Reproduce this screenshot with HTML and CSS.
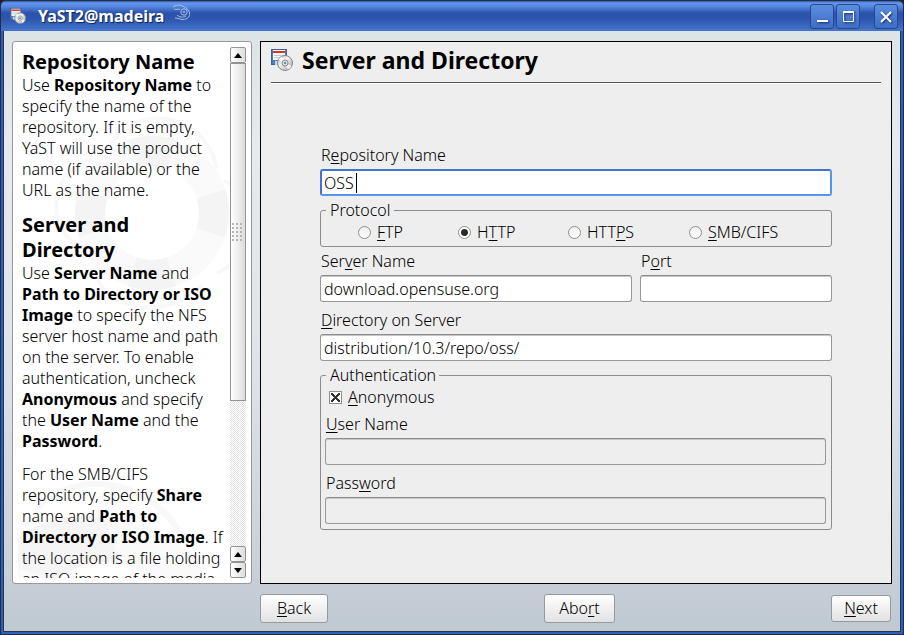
FILE: index.html
```
<!DOCTYPE html>
<html lang="en">
<head>
  <meta charset="UTF-8">
  <title>YaST2@madeira</title>
  <link rel="stylesheet" href="styles.css">
</head>
<body>

<!-- shared drawings -->
<svg class="defs" aria-hidden="true">
  <defs>
    <linearGradient id="disc" x1="0" y1="0" x2="1" y2="1">
      <stop offset="0" stop-color="#bdbdbd"/>
      <stop offset=".4" stop-color="#f1f1f1"/>
      <stop offset="1" stop-color="#a4a4a4"/>
    </linearGradient>
    <symbol id="source" viewBox="0 0 22 22">
      <rect x=".5" y=".5" width="15" height="15" fill="#4a7dc0" stroke="#3d6199"/>
      <rect x="2" y="1" width="12" height="10" fill="#f6f6f6"/>
      <rect x="2" y="2" width="12" height="2" fill="#e0321c"/>
      <path d="M3 6.500H13M3 8.500H10" stroke="#c5cbd6"/>
      <rect x="4" y="12" width="6" height="4" fill="#cfd6e2"/>
      <circle cx="14" cy="14" r="7.500" fill="url(#disc)" stroke="#868686"/>
      <path d="M14 14L7.500 10.500A7 7 0 0 1 11 7.500zM14 14L20.500 17A7 7 0 0 1 17 20.500z" fill="#fff" opacity=".8"/>
      <circle cx="14" cy="14" r="3" fill="#dfe3ea" stroke="#8b8b8b"/>
      <circle cx="14" cy="14" r="1.200" fill="#5d8acb"/>
    </symbol>
  </defs>
</svg>

<div class="window">
  <header class="titlebar">
    <svg class="app-icon"><use href="#source"/></svg>
    <h1 class="title">YaST2@madeira</h1>
    <svg class="gecko" viewBox="0 0 20 18">
      <path d="M1 3C3 1 5 2 7 1C12 2 17 5 17.500 9C18 13 15 15.500 11 15.500C8 15.500 6 14 3 14M2 5C4 6 6 5 8 5M5 11C7 13 11 14 14 12"/>
      <circle cx="12" cy="8" r="3.200"/>
      <circle cx="12" cy="8" r=".8"/>
    </svg>
    <div class="window-buttons">
      <button class="win-btn" aria-label="Minimize"><svg viewBox="0 0 22 22"><path d="M6 16H17" stroke-width="2"/></svg></button>
      <button class="win-btn" aria-label="Maximize"><svg viewBox="0 0 22 22"><path d="M6.500 7V16.500H16.500V7"/><path d="M6 7H17" stroke-width="2"/></svg></button>
      <button class="win-btn close" aria-label="Close"><svg viewBox="0 0 22 22"><path d="M6 7L16 17M16 7L6 17" stroke-width="2"/></svg></button>
    </div>
  </header>

  <div class="content">
    <aside class="help">
      <div class="help-text">
        <svg class="buoy" viewBox="0 0 200 200">
          <circle cx="100" cy="100" r="62" fill="none" stroke="#fafafa" stroke-width="30"/>
          <circle cx="100" cy="100" r="62" fill="none" stroke="#f4f4f4" stroke-width="30" stroke-dasharray="40 57.400" stroke-dashoffset="20"/>
          <path d="M55 38C75 -8 150 -8 165 55M172 68C214 85 210 140 165 160M150 172C120 205 60 200 45 165M32 135C-8 120 -5 60 40 45" fill="none" stroke="#f8f8f8" stroke-width="4"/>
        </svg>
        <svg class="buoy buoy-low" viewBox="0 0 200 100">
          <circle cx="88" cy="156" r="94" fill="none" stroke="#fafafa" stroke-width="44"/>
          <path d="M10 52A116 116 0 0 1 88 40L100 84A72 72 0 0 0 40 102L0 90V60z" fill="#f5f5f5"/>
          <path d="M20 30C50 -6 130 -6 165 60" fill="none" stroke="#f8f8f8" stroke-width="6"/>
        </svg>
        <h2>Repository Name</h2>
        <p>Use <b>Repository Name</b> to specify the name of the repository. If it is empty, YaST will use the product name (if available) or the URL as the name.</p>
        <h2>Server and Directory</h2>
        <p>Use <b>Server Name</b> and <b>Path to Directory or ISO Image</b> to specify the NFS server host name and path on the server. To enable authentication, uncheck <b>Anonymous</b> and specify the <b>User Name</b> and the <b>Password</b>.</p>
        <p>For the SMB/CIFS repository, specify <b>Share</b> name and <b>Path to Directory or ISO Image</b>. If the location is a file holding an ISO image of the media</p>
      </div>
      <div class="scrollbar">
        <button class="arrow" aria-label="Scroll up"><svg viewBox="0 0 8 5"><path d="M0 5L4 0L8 5z"/></svg></button>
        <div class="track"><div class="thumb"></div></div>
        <button class="arrow" aria-label="Scroll up"><svg viewBox="0 0 8 5"><path d="M0 5L4 0L8 5z"/></svg></button>
        <button class="arrow" aria-label="Scroll down"><svg viewBox="0 0 8 5"><path d="M0 0L4 5L8 0z"/></svg></button>
      </div>
    </aside>

    <main class="dialog">
      <div class="dialog-head">
        <svg class="head-icon"><use href="#source"/></svg>
        <h2>Server and Directory</h2>
      </div>

      <form class="form" id="server-form">
        <div class="field">
          <label for="repo">R<u>e</u>pository Name</label>
          <div class="caret-box">
            <input class="text active" type="text" id="repo" value="OSS">
            <span class="caret"></span>
          </div>
        </div>

        <fieldset class="group protocol">
          <legend>Protocol</legend>
          <div class="radios">
            <label><input type="radio" name="protocol"><span><u>F</u>TP</span></label>
            <label><input type="radio" name="protocol" checked><span>H<u>T</u>TP</span></label>
            <label><input type="radio" name="protocol"><span>HTT<u>P</u>S</span></label>
            <label><input type="radio" name="protocol"><span><u>S</u>MB/CIFS</span></label>
          </div>
        </fieldset>

        <div class="server-row">
          <div class="field">
            <label for="server">Ser<u>v</u>er Name</label>
            <input class="text" type="text" id="server" value="download.opensuse.org">
          </div>
          <div class="field">
            <label for="port">P<u>o</u>rt</label>
            <input class="text" type="text" id="port">
          </div>
        </div>

        <div class="field">
          <label for="dir"><u>D</u>irectory on Server</label>
          <input class="text" type="text" id="dir" value="distribution/10.3/repo/oss/">
        </div>

        <fieldset class="group auth">
          <legend>Authentication</legend>
          <label class="check"><input type="checkbox" checked><span><u>A</u>nonymous</span></label>
          <div class="field">
            <label for="user"><u>U</u>ser Name</label>
            <input class="text" type="text" id="user" disabled>
          </div>
          <div class="field">
            <label for="password">Pass<u>w</u>ord</label>
            <input class="text" type="password" id="password" disabled>
          </div>
        </fieldset>
      </form>
    </main>

    <!-- splitter grip between the panes -->
    <div class="grip"></div>

    <footer class="actions">
      <button class="btn"><u>B</u>ack</button>
      <button class="btn">Abo<u>r</u>t</button>
      <button class="btn next" form="server-form"><u>N</u>ext</button>
    </footer>
  </div>
</div>

</body>
</html>
```

FILE: styles.css
```
*{box-sizing:border-box}
body{margin:0;background:#222;color:#000;font-family:"Noto Sans","Open Sans",sans-serif;font-size:16px;font-weight:300;line-height:21px}
h1,h2,p{margin:0}
button,input{font:inherit;color:inherit}
u{text-decoration-thickness:1px;text-underline-offset:2px}
.defs{position:absolute;width:0;height:0}

/* window frame */
.window{display:flex;flex-direction:column;height:100vh;border:1px solid #222c44;border-radius:6px 6px 0 0;overflow:hidden;background:#2f5fbd}
.titlebar{display:flex;align-items:center;flex:none;height:30px;padding:0 5px 0 9px;background:linear-gradient(#2e5aa6 0,#6497f0 2px,#5284dc 6px,#2c53ab 12px,#2d56ae 18px,#4575cf 30px)}
.app-icon{width:16px;height:16px}
.title{margin-left:12px;color:#fff;font-size:16px;font-weight:700;text-shadow:1px 1px 1px #0c2456}
.gecko{align-self:flex-start;width:20px;height:18px;margin:3px 0 0 8px;fill:none;stroke:#a9bfe6}
.window-buttons{display:flex;gap:2px;margin-left:auto}
.win-btn{width:24px;height:25px;padding:0;border:1px solid #274a8c;border-radius:3px;background:linear-gradient(#5b8de0,#3f6ec6)}
.win-btn svg{display:block;width:22px;height:22px;fill:none;stroke:#fff;filter:drop-shadow(1px 1px 1px #10285c)}
.close{margin-left:12px}

.content{position:relative;display:grid;grid-template-columns:240px 1fr;grid-template-rows:1fr auto;column-gap:8px;flex:1;min-height:0;margin:0 2px 2px;padding:10px 8px 8px;border:solid #27344e;border-width:0 1px 1px;background:linear-gradient(#dce4e6 0,#e6eaee 20%,#e0e5ea 50%,#ccd4db 85%,#bfc9d2)}

/* help pane */
.help{display:flex;min-height:0;padding:5px;border:1px solid #989898;border-radius:3px;background:#fff}
.help-text{position:relative;flex:1;min-height:0;padding:2px 4px 0;overflow:hidden}
.help-text h2{position:relative;padding-bottom:1px;font-size:20px;font-weight:700;line-height:25px}
.help-text p{position:relative;margin-bottom:11px}
.help-text p+p{padding-top:1px}
.help-text b{font-weight:700}
.buoy{position:absolute;left:34px;top:66px;width:200px;height:200px}
.buoy-low{left:0;top:431px;width:200px;height:100px}
.scrollbar{display:flex;flex-direction:column;flex:none;width:16px}
.arrow{display:grid;place-items:center;flex:none;height:16px;padding:0;border:1px solid #949494;border-radius:2px;background:linear-gradient(90deg,#fff,#ddd)}
.arrow svg{width:8px;height:5px}
.track{flex:1;background:repeating-conic-gradient(#e2e2e2 0 25%,#fff 0 50%) 0 0/2px 2px}
.thumb{height:70%;border:1px solid #949494;background:linear-gradient(90deg,#fff,#dcdcdc)}
.grip{position:absolute;left:228px;top:192px;width:12px;height:20px;background:radial-gradient(circle at 1px 1px,#b5b5b5 1px,transparent 1px) 0 0/4px 4px}

/* main dialog */
.dialog{display:flex;flex-direction:column;min-width:0;padding:0 10px;border:1px solid #000;background:#eee}
.dialog-head{display:flex;align-items:center;gap:9px;height:41px;padding-bottom:5px;border-bottom:1px solid #555;box-shadow:0 1px #fff}
.dialog-head h2{font-size:23px;font-weight:700;line-height:30px}
.head-icon{width:22px;height:22px}
.form{display:flex;flex-direction:column;margin:auto 49px;padding-top:9px}
.field{display:flex;flex-direction:column;min-width:0}
.field label{height:24px;padding-left:1px}
.text{display:block;width:100%;height:27px;padding:0 3px;border:1px solid #999;border-top-color:#8c8c8c;border-radius:3px;background:#fff;box-shadow:inset 0 1px #c8c8c8;outline:0}
.text:disabled{background:#eee}
.active{border:2px solid #5a93ea;border-color:#3f76cd #5a93ea #5a93ea #3f76cd;padding:0 2px;box-shadow:none}
.caret-box{position:relative}
.caret{position:absolute;left:36px;top:4px;width:1px;height:20px;background:#000}
.active:focus{caret-color:transparent}
.group{min-width:0;margin:0;padding:1px 5px 5px 4px;border:1px solid #8c8c8c;border-radius:3px}
.group legend{height:21px;margin-left:1px;padding:0 3px 0 4px}
.protocol{height:47px;margin:4px 0}
.radios{display:grid;grid-template-columns:100px 110px 121px 1fr;padding-left:33px}
.radios label,.check{display:flex;align-items:center;gap:6px}
input[type=radio],input[type=checkbox]{appearance:none;flex:none;width:13px;height:13px;margin:0;border:1px solid #909090;background:linear-gradient(#eee,#fff)}
input[type=radio]{border-radius:50%}
input[type=radio]:checked{background:radial-gradient(circle,#2a2a2a 3px,#fff 4px)}
input[type=checkbox]:checked{background:linear-gradient(45deg,transparent 40%,#333 40% 60%,transparent 60%) center/9px 9px no-repeat,linear-gradient(-45deg,transparent 40%,#333 40% 60%,transparent 60%) center/9px 9px no-repeat,#fff}
.server-row{display:grid;grid-template-columns:312px 1fr;gap:8px;margin-bottom:8px}
.auth{margin-top:4px}
.check{margin-bottom:6px;padding-left:4px}
.auth .field+.field{margin-top:8px}

.actions{display:flex;justify-content:space-between;align-items:center;grid-column:2;height:39px;padding:10px 1px 0 0}
.btn{min-width:68px;height:29px;padding:0 14px;border:1px solid #999;border-radius:3px;background:linear-gradient(#fff,#e2e2e2)}
.next{min-width:60px;height:27px;padding:0 12px}
```
